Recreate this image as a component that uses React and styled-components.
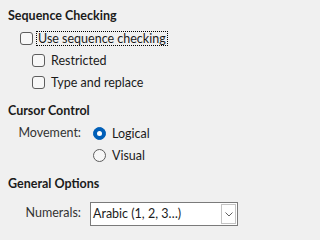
import React from 'react';
import styled, { createGlobalStyle } from 'styled-components';

const GlobalStyle = createGlobalStyle`
  html, body {
    margin: 0;
    background: #f0f0f0;
  }
  body {
    font-family: 'Lato', 'Noto Sans', sans-serif;
    font-size: 12.5px;
    color: #1b1b1b;
  }
`;

const Page = styled.div`
  display: flex;
  flex-direction: column;
  padding: 5px 0 0 8px;
  width: 247px;
  height: 227px;
  box-sizing: border-box;
`;

const Heading = styled.div`
  font-weight: 700;
  line-height: 22px;
  margin-top: ${({ $first }) => ($first ? '0' : '7px')};
`;

const Row = styled.div`
  display: flex;
  align-items: center;
  height: 22px;
  padding-left: ${({ $indent }) => $indent}px;
`;

const FieldRow = styled.div`
  display: flex;
  align-items: flex-start;
`;

const Box = styled.span`
  width: 11px;
  height: 11px;
  border: 1px solid #5d5d5d;
  border-radius: 3px;
  background: #f7f7f7;
  flex: none;
`;

const Label = styled.span`
  margin-left: ${({ $focus }) => ($focus ? '3px' : '4px')};
  padding: 0 1px;
  line-height: 13px;
  border: 1px ${({ $focus }) => ($focus ? 'dotted #000' : 'solid transparent')};
  white-space: nowrap;
`;

const FieldName = styled.span`
  width: 73px;
  margin-top: ${({ $offset }) => $offset || 0}px;
  text-align: right;
  line-height: 22px;
  flex: none;
  color: #333;
`;

const Radio = styled.span`
  width: 11px;
  height: 11px;
  border-radius: 50%;
  flex: none;
  display: flex;
  align-items: center;
  justify-content: center;
  border: 1px solid ${({ $on }) => ($on ? '#005fb8' : '#5d5d5d')};
  background: ${({ $on }) => ($on ? '#005fb8' : '#f7f7f7')};

  &::after {
    content: '';
    display: ${({ $on }) => ($on ? 'block' : 'none')};
    width: 5px;
    height: 5px;
    border-radius: 50%;
    background: #fff;
  }
`;

const Options = styled.div`
  margin-left: 12px;
  display: flex;
  flex-direction: column;
`;

const Combo = styled.div`
  margin-left: 9px;
  margin-top: 7px;
  width: 146px;
  height: 22px;
  display: flex;
  align-items: stretch;
  background: #fff;
  border: 1px solid #7a7a7a;
`;

const ComboText = styled.span`
  flex: 1;
  padding-left: 2px;
  line-height: 22px;
  white-space: nowrap;
`;

const ComboButton = styled.span`
  width: 13px;
  margin: 1px;
  border: 1px solid #c4c4c4;
  display: flex;
  align-items: center;
  justify-content: center;
`;

function Check({ label, indent, focus }) {
  return (
    <Row $indent={indent}>
      <Box />
      <Label $focus={focus}>{label}</Label>
    </Row>
  );
}

function RadioItem({ label, on }) {
  return (
    <Row>
      <Radio $on={on} />
      <Label>{label}</Label>
    </Row>
  );
}

export default function App() {
  return (
    <>
      <GlobalStyle />
      <Page>
        <Heading $first>Sequence Checking</Heading>
        <Check label="Use sequence checking" indent={12} focus />
        <Check label="Restricted" indent={24} />
        <Check label="Type and replace" indent={24} />

        <Heading>Cursor Control</Heading>
        <FieldRow>
          <FieldName>Movement:</FieldName>
          <Options>
            <RadioItem label="Logical" on />
            <RadioItem label="Visual" />
          </Options>
        </FieldRow>

        <Heading>General Options</Heading>
        <FieldRow>
          <FieldName $offset={7}>Numerals:</FieldName>
          <Combo>
            <ComboText>Arabic (1, 2, 3…)</ComboText>
            <ComboButton>
              <svg width="8" height="5" viewBox="0 0 8 5">
                <path d="M0.5 0.5 L4 4 L7.5 0.5" fill="none" stroke="#606060" strokeWidth="1" />
              </svg>
            </ComboButton>
          </Combo>
        </FieldRow>
      </Page>
    </>
  );
}
